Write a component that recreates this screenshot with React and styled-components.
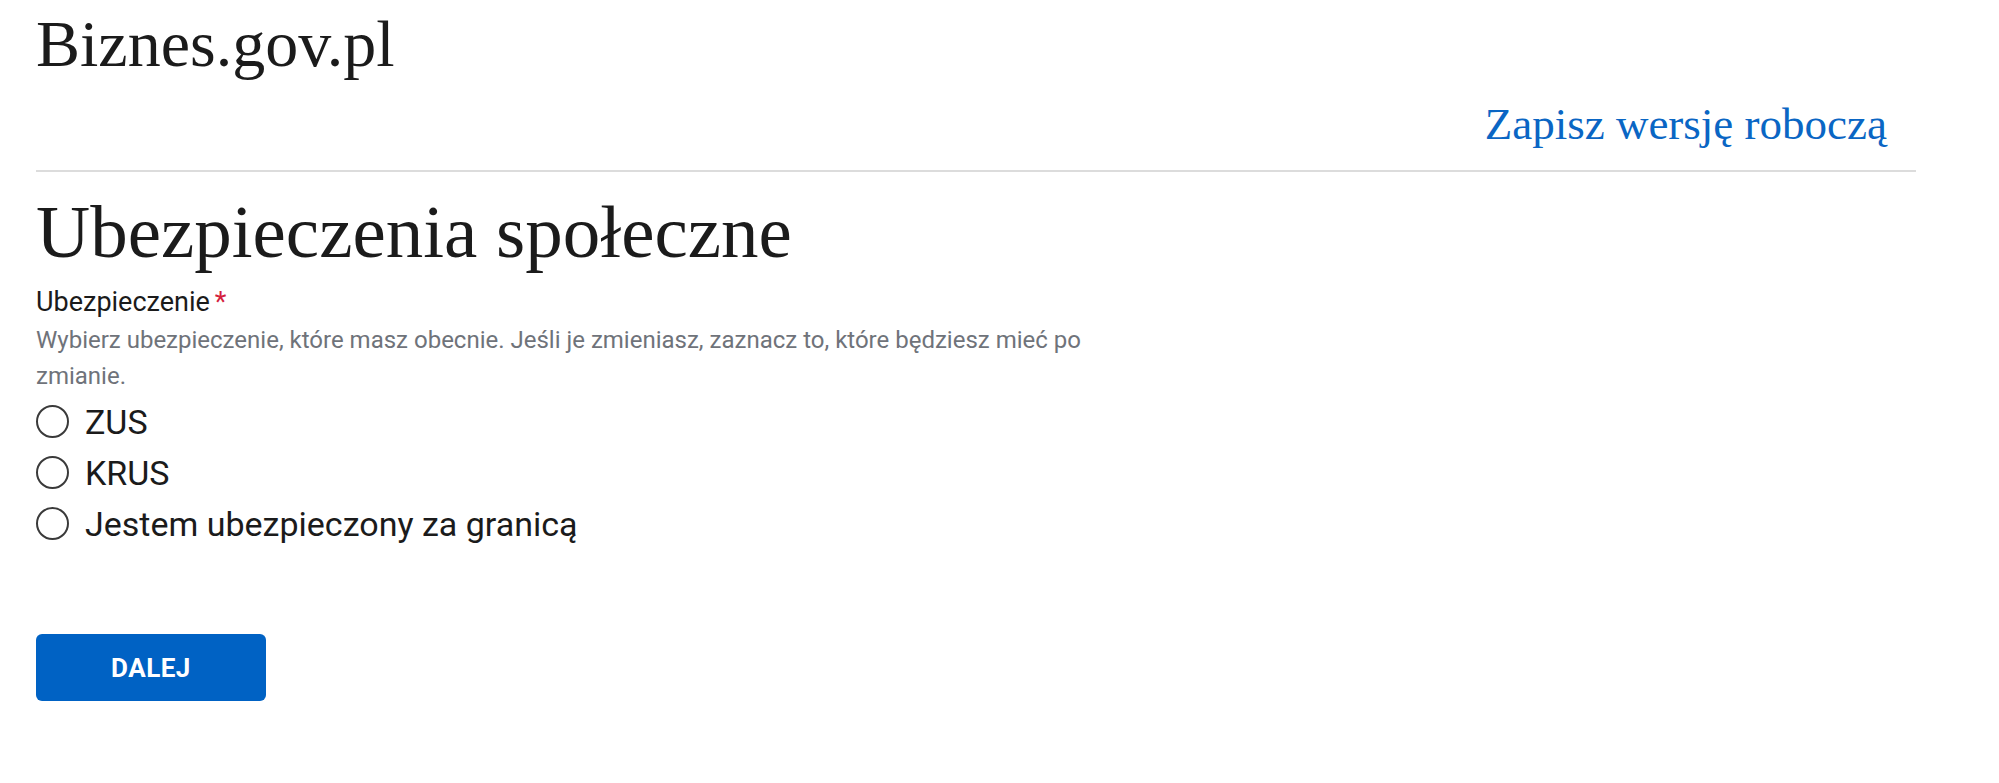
import React from "react";
import styled, { createGlobalStyle } from "styled-components";

const GlobalStyle = createGlobalStyle`
  html, body {
    margin: 0;
    padding: 0;
    background: #ffffff;
  }
  body {
    font-family: Roboto, "Liberation Sans", Arial, sans-serif;
    color: #1b1b1b;
  }
`;

const options = [
  { id: "zus", label: "ZUS" },
  { id: "krus", label: "KRUS" },
  { id: "abroad", label: "Jestem ubezpieczony za granicą" },
];

const App = () => {
  return (
    <Page>
      <GlobalStyle />
      <Container>
        <Header>
          <Brand>Biznes.gov.pl</Brand>
          <SaveRow>
            <SaveLink href="#">Zapisz wersję roboczą</SaveLink>
          </SaveRow>
          <Divider />
        </Header>

        <Form>
          <Heading>Ubezpieczenia społeczne</Heading>
          <Field>
            <Label>
              Ubezpieczenie<Required>*</Required>
            </Label>
            <Hint>
              Wybierz ubezpieczenie, które masz obecnie. Jeśli je zmieniasz,
              zaznacz to, które będziesz mieć po zmianie.
            </Hint>
            <RadioList>
              {options.map((opt) => (
                <RadioRow key={opt.id}>
                  <RadioInput type="radio" name="insurance" value={opt.id} />
                  <RadioText>{opt.label}</RadioText>
                </RadioRow>
              ))}
            </RadioList>
          </Field>
          <NextButton type="button">DALEJ</NextButton>
        </Form>
      </Container>
    </Page>
  );
};

const Page = styled.div`
  width: 100%;
  min-height: 783px;
  background: #ffffff;
`;

const Container = styled.div`
  max-width: 1880px;
  padding: 0 0 0 36px;
`;

const Header = styled.header`
  display: flex;
  flex-direction: column;
  padding-top: 11px;
`;

const Brand = styled.div`
  font-family: "Liberation Serif", "DejaVu Serif", serif;
  font-size: 66px;
  line-height: 65px;
  color: #1b1b1b;
`;

const SaveRow = styled.div`
  display: flex;
  justify-content: flex-end;
  margin-top: 26px;
  padding-right: 29px;
`;

const SaveLink = styled.a`
  font-family: "Liberation Serif", "DejaVu Serif", serif;
  font-size: 45px;
  line-height: 44px;
  color: #0a66c4;
  text-decoration: none;
`;

const Divider = styled.hr`
  margin: 24px 0 0;
  border: none;
  height: 2px;
  background: #dcdcdc;
`;

const Form = styled.main`
  display: flex;
  flex-direction: column;
  align-items: flex-start;
`;

const Heading = styled.h1`
  margin: 23px 0 0;
  font-family: "Liberation Serif", "DejaVu Serif", serif;
  font-weight: 400;
  font-size: 75px;
  line-height: 74px;
  color: #1b1b1b;
`;

const Field = styled.fieldset`
  margin: 18px 0 0;
  padding: 0;
  border: none;
  max-width: 1100px;
`;

const Label = styled.div`
  font-size: 27px;
  line-height: 31px;
  color: #1b1b1b;
`;

const Required = styled.span`
  color: #d4213d;
  margin-left: 5px;
`;

const Hint = styled.p`
  margin: 4px 0 0;
  font-size: 24px;
  line-height: 36px;
  color: #6f737a;
`;

const RadioList = styled.div`
  display: flex;
  flex-direction: column;
  margin-top: 2px;
`;

const RadioRow = styled.label`
  display: flex;
  align-items: center;
  gap: 16px;
  height: 51px;
  cursor: pointer;
`;

const RadioInput = styled.input`
  appearance: none;
  margin: 0;
  width: 33px;
  height: 33px;
  border: 2px solid #3a3a3a;
  border-radius: 50%;
  background: #ffffff;
  box-sizing: border-box;
  flex: none;
`;

const RadioText = styled.span`
  font-size: 34px;
  line-height: 1;
  color: #1b1b1b;
`;

const NextButton = styled.button`
  margin-top: 85px;
  width: 230px;
  height: 67px;
  border: none;
  border-radius: 6px;
  background: #0062c4;
  color: #ffffff;
  font-family: Roboto, "Liberation Sans", Arial, sans-serif;
  font-weight: 700;
  font-size: 26px;
  letter-spacing: 0.5px;
  cursor: pointer;
`;

export default App;
